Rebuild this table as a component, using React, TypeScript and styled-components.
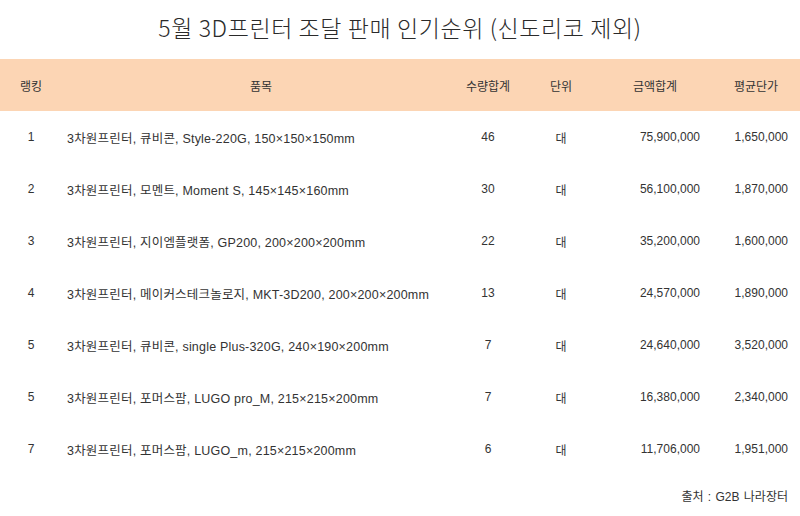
import React from "react";
import styled, { createGlobalStyle } from "styled-components";

const Global = createGlobalStyle`
  html, body { margin: 0; padding: 0; background: #ffffff; }
  body { font-family: "Liberation Sans", "Noto Sans CJK KR", sans-serif; color: #333333; }
`;

const Page = styled.div`
  width: 800px;
  height: 516px;
  display: flex;
  flex-direction: column;
  background: #ffffff;
  overflow: hidden;
`;

const Title = styled.h1`
  margin: 0;
  height: 59px;
  flex: 0 0 59px;
  display: flex;
  align-items: center;
  justify-content: center;
  font-family: "Noto Sans CJK KR", "Noto Sans", sans-serif;
  font-size: 23px;
  font-weight: 300;
  letter-spacing: 0.6px;
  color: #2a2a2a;
  padding-bottom: 6px;
  box-sizing: border-box;
`;

const Table = styled.div`
  display: grid;
  grid-template-columns: 62px 398px 56px 90px 106px 88px;
  grid-auto-rows: 52px;
`;

const HeadRow = styled.div`
  display: contents;
`;

const HeadCell = styled.div<{ $shift?: number }>`
  background: #fcd5b4;
  display: flex;
  align-items: center;
  justify-content: center;
  font-size: 12px;
  color: #333333;
  padding-right: ${(p) => p.$shift ?? 0}px;
`;

const Row = styled.div`
  display: contents;
`;

const Cell = styled.div<{ $align: "left" | "center" | "right" }>`
  display: flex;
  align-items: center;
  justify-content: ${(p) =>
    p.$align === "left" ? "flex-start" : p.$align === "right" ? "flex-end" : "center"};
  padding: ${(p) => (p.$align === "left" ? "0 0 0 5px" : p.$align === "right" ? "0 12px 0 0" : "0")};
  font-size: ${(p) => (p.$align === "left" ? "12.5px" : "12px")};
  letter-spacing: ${(p) => (p.$align === "left" ? "0.2px" : "0")};
  color: #333333;
  white-space: nowrap;
`;

const Footer = styled.div`
  display: flex;
  justify-content: flex-end;
  align-items: center;
  height: 44px;
  padding-right: 12px;
  font-size: 12px;
  word-spacing: 1px;
  color: #333333;
`;

type Item = {
  rank: string;
  name: string;
  qty: string;
  unit: string;
  amount: string;
  avg: string;
};

const items: Item[] = [
  { rank: "1", name: "3차원프린터, 큐비콘, Style-220G, 150×150×150mm", qty: "46", unit: "대", amount: "75,900,000", avg: "1,650,000" },
  { rank: "2", name: "3차원프린터, 모멘트, Moment S, 145×145×160mm", qty: "30", unit: "대", amount: "56,100,000", avg: "1,870,000" },
  { rank: "3", name: "3차원프린터, 지이엠플랫폼, GP200, 200×200×200mm", qty: "22", unit: "대", amount: "35,200,000", avg: "1,600,000" },
  { rank: "4", name: "3차원프린터, 메이커스테크놀로지, MKT-3D200, 200×200×200mm", qty: "13", unit: "대", amount: "24,570,000", avg: "1,890,000" },
  { rank: "5", name: "3차원프린터, 큐비콘, single Plus-320G, 240×190×200mm", qty: "7", unit: "대", amount: "24,640,000", avg: "3,520,000" },
  { rank: "5", name: "3차원프린터, 포머스팜, LUGO pro_M, 215×215×200mm", qty: "7", unit: "대", amount: "16,380,000", avg: "2,340,000" },
  { rank: "7", name: "3차원프린터, 포머스팜, LUGO_m, 215×215×200mm", qty: "6", unit: "대", amount: "11,706,000", avg: "1,951,000" },
];

export default function App() {
  return (
    <>
      <Global />
      <Page>
        <Title>5월 3D프린터 조달 판매 인기순위 (신도리코 제외)</Title>
        <Table>
          <HeadRow>
            <HeadCell>랭킹</HeadCell>
            <HeadCell>품목</HeadCell>
            <HeadCell>수량합계</HeadCell>
            <HeadCell>단위</HeadCell>
            <HeadCell $shift={8}>금액합계</HeadCell>
            <HeadCell>평균단가</HeadCell>
          </HeadRow>
          {items.map((it, i) => (
            <Row key={i}>
              <Cell $align="center">{it.rank}</Cell>
              <Cell $align="left">{it.name}</Cell>
              <Cell $align="center">{it.qty}</Cell>
              <Cell $align="center">{it.unit}</Cell>
              <Cell $align="right">{it.amount}</Cell>
              <Cell $align="right">{it.avg}</Cell>
            </Row>
          ))}
        </Table>
        <Footer>출처 : G2B 나라장터</Footer>
      </Page>
    </>
  );
}
